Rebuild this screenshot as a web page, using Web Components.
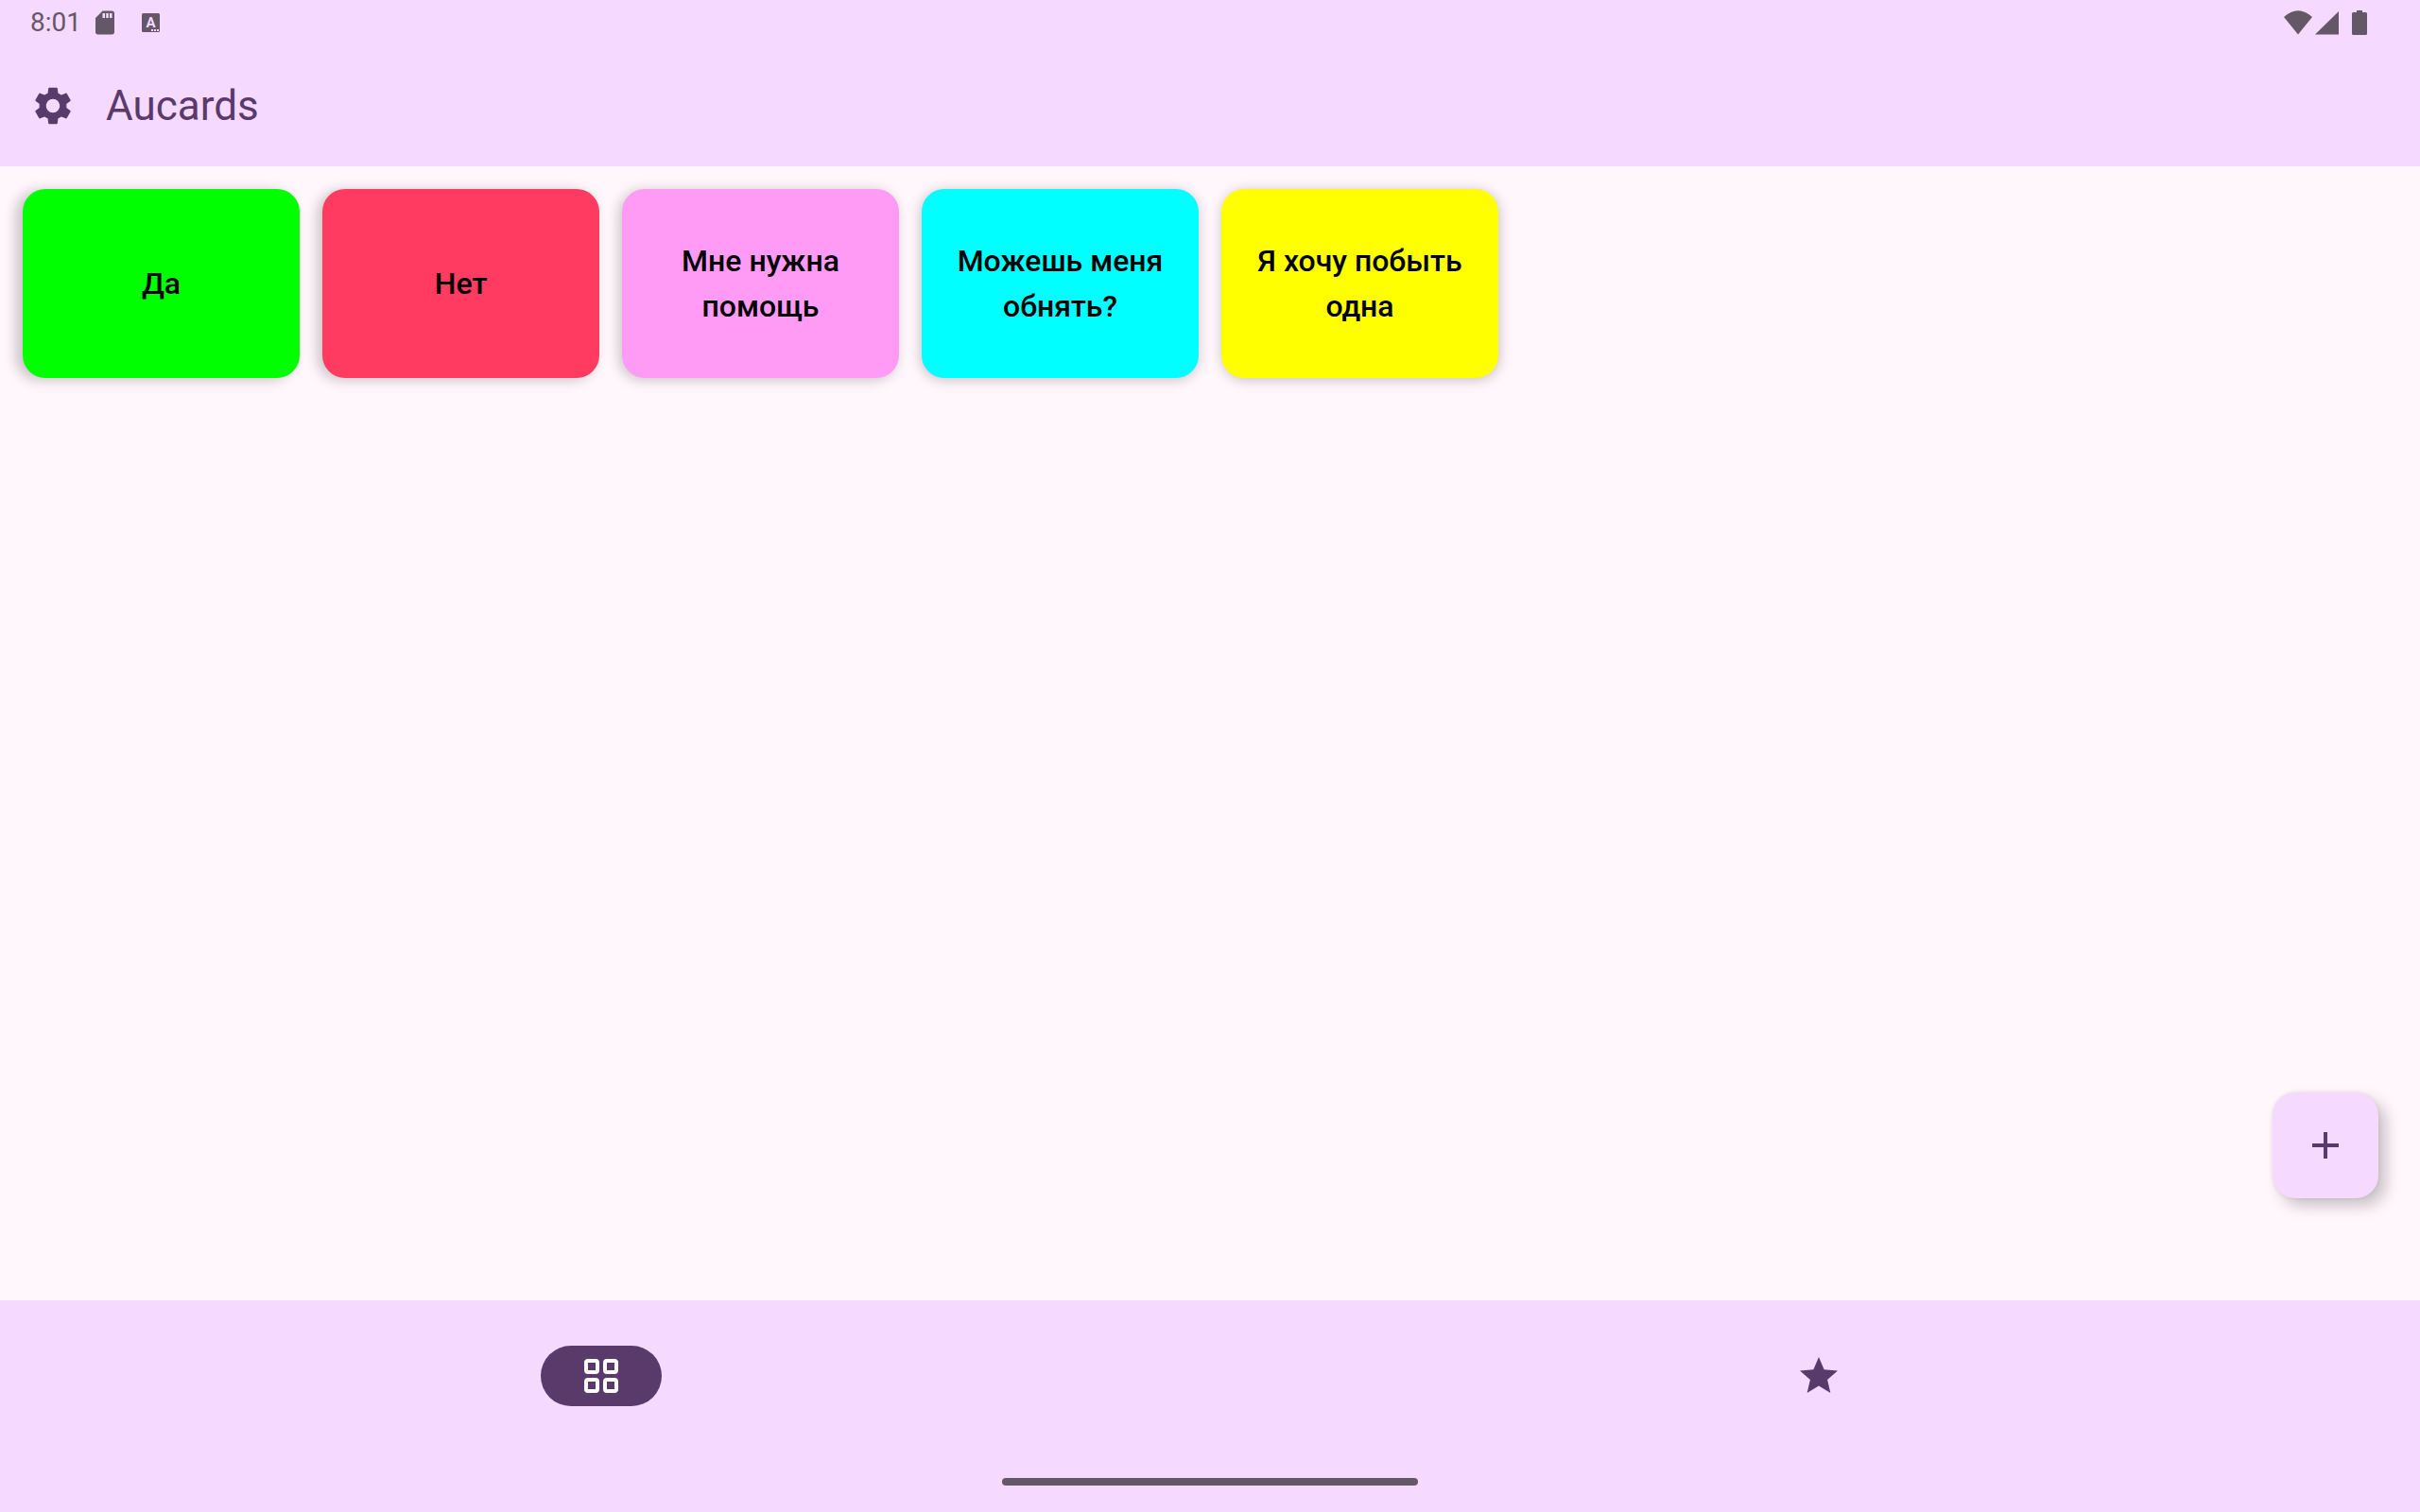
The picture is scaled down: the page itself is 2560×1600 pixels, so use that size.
<!DOCTYPE html>
<html lang="ru">
<head>
<meta charset="UTF-8">
<meta name="viewport" content="width=device-width, initial-scale=1">
<title>Aucards</title>
<style>
    :root {
        --bar-color: #f5d9ff;
        --page-color: #fff7fc;
        --primary: #5a3a6b;
        --system: #645767;
    }
    body {
        margin: 0;
        font-family: Roboto, "Liberation Sans", sans-serif;
        background: var(--page-color);
    }
</style>
</head>
<body>
<aucards-app></aucards-app>

<script>
// --- Status Bar ---
class StatusBar extends HTMLElement {
    constructor() {
        super();
        this.attachShadow({ mode: 'open' });
    }

    connectedCallback() {
        this.shadowRoot.innerHTML = `
            <style>
                :host { display: flex; align-items: center; justify-content: space-between; height: 48px; padding: 0 52px 0 32px; color: var(--system); }
                .group { display: flex; align-items: center; }
                time { font-size: 28px; line-height: 48px; margin-right: 10px; }
                svg { display: block; fill: currentColor; }
                .keyboard { margin-left: 20px; }
                .keyboard text { font: 700 15px Roboto, sans-serif; fill: var(--bar-color); }
                .keyboard path { fill: var(--bar-color); }
            </style>
            <div class="group">
                <time>${this.getAttribute('time')}</time>
                <svg width="30" height="30" viewBox="0 0 24 24"><path d="M18 2h-8L4 8v12c0 1.1.9 2 2 2h12c1.1 0 2-.9 2-2V4c0-1.1-.9-2-2-2zM12 8h-2V4h2v4zm3 0h-2V4h2v4zm3 0h-2V4h2v4z"/></svg>
                <svg class="keyboard" width="28" height="48" viewBox="0 0 28 48">
                    <rect x="4" y="14" width="19" height="20" rx="1.5"/>
                    <text x="13.5" y="29" text-anchor="middle">A</text>
                    <path d="M14 31h2v2h-2zM17 31h2v2h-2zM20 31h2v2h-2z"/>
                </svg>
            </div>
            <svg width="92" height="48" viewBox="0 0 92 48">
                <path d="M0 18Q15 4.500 30 18L15 36.500z"/>
                <path d="M58 12v24.500H33z"/>
                <path d="M77 13v-2h6v2h3.500q1.500 0 1.500 1.500v21q0 1.500-1.500 1.500h-13q-1.500 0-1.500-1.500v-21q0-1.500 1.500-1.500z"/>
            </svg>
        `;
    }
}
customElements.define('status-bar', StatusBar);

// --- Top App Bar ---
class TopBar extends HTMLElement {
    constructor() {
        super();
        this.attachShadow({ mode: 'open' });
    }

    connectedCallback() {
        this.shadowRoot.innerHTML = `
            <style>
                :host { display: flex; align-items: center; gap: 16px; height: 128px; padding: 0 16px; color: var(--primary); }
                button { display: grid; place-items: center; width: 80px; height: 80px; padding: 0; border: 0; border-radius: 50%; background: none; color: inherit; }
                svg { fill: currentColor; }
                h1 { margin: 0; font-size: 44px; line-height: 56px; font-weight: 400; }
            </style>
            <button type="button" aria-label="Настройки">
                <svg width="48" height="48" viewBox="0 0 24 24"><path d="M19.14 12.94c.04-.3.06-.61.06-.94 0-.32-.02-.64-.07-.94l2.030-1.580c.18-.14.23-.41.12-.61l-1.920-3.320c-.12-.22-.37-.29-.59-.22l-2.390.96c-.5-.38-1.030-.7-1.620-.94l-.36-2.540c-.04-.24-.24-.41-.48-.41h-3.840c-.24 0-.43.17-.47.41l-.36 2.540c-.59.24-1.130.57-1.620.94l-2.390-.96c-.22-.08-.47 0-.59.22L2.740 8.870c-.12.21-.08.47.12.61l2.030 1.580c-.05.3-.09.63-.09.94s.02.64.07.94l-2.030 1.580c-.18.14-.23.41-.12.61l1.920 3.320c.12.22.37.29.59.22l2.390-.96c.5.38 1.030.7 1.620.94l.36 2.540c.05.24.24.41.48.41h3.840c.24 0 .44-.17.47-.41l.36-2.540c.59-.24 1.130-.56 1.620-.94l2.390.96c.22.08.47 0 .59-.22l1.920-3.320c.12-.22.07-.47-.12-.61l-2.010-1.580zM12 15.600c-1.980 0-3.600-1.620-3.600-3.600s1.620-3.600 3.600-3.600 3.600 1.620 3.600 3.600-1.620 3.600-3.600 3.600z"/></svg>
            </button>
            <h1><slot></slot></h1>
        `;
    }
}
customElements.define('top-bar', TopBar);

// --- Card ---
class TalkCard extends HTMLElement {
    constructor() {
        super();
        this.attachShadow({ mode: 'open' });
    }

    connectedCallback() {
        const color = this.getAttribute('color');
        const shade = this.getAttribute('shade');

        this.shadowRoot.innerHTML = `
            <style>
                :host { display: block; }
                button {
                    display: block; width: 100%; min-height: 200px; padding: 24px; border: 0; border-radius: 24px;
                    background: ${color}; color: #000; box-shadow: ${shade}px 2px 14px rgba(0, 0, 0, 0.22);
                    font: 500 32px/48px Roboto, "Liberation Sans", sans-serif; text-align: center;
                }
            </style>
            <button type="button"><slot></slot></button>
        `;
    }
}
customElements.define('talk-card', TalkCard);

// --- Floating Add Button ---
class AddButton extends HTMLElement {
    constructor() {
        super();
        this.attachShadow({ mode: 'open' });
    }

    connectedCallback() {
        this.shadowRoot.innerHTML = `
            <style>
                :host { display: block; }
                button { display: grid; place-items: center; width: 112px; height: 112px; padding: 0; border: 0; border-radius: 24px; background: var(--bar-color); color: var(--primary); box-shadow: 8px 8px 16px rgba(0, 0, 0, 0.22), 0 0 4px rgba(0, 0, 0, 0.08); }
            </style>
            <button type="button" aria-label="Добавить">
                <svg width="48" height="48" viewBox="0 0 24 24" fill="currentColor"><path d="M19 13h-6v6h-2v-6H5v-2h6V5h2v6h6z"/></svg>
            </button>
        `;
    }
}
customElements.define('add-button', AddButton);

// --- Bottom Navigation ---
class BottomNav extends HTMLElement {
    constructor() {
        super();
        this.attachShadow({ mode: 'open' });
    }

    connectedCallback() {
        this.shadowRoot.innerHTML = `
            <style>
                :host { display: block; background: var(--bar-color); color: var(--primary); }
                nav { display: grid; grid-template-columns: 1fr 1fr; gap: 16px; }
                button { display: grid; place-items: center; height: 160px; padding: 0; border: 0; background: none; color: inherit; }
                .pill { display: grid; place-items: center; width: 128px; height: 64px; border-radius: 32px; }
                .active { background: var(--primary); color: #fff; }
                .gesture { display: grid; place-items: center; height: 64px; }
                .gesture i { width: 440px; height: 8px; border-radius: 4px; background: var(--system); }
            </style>
            <nav>
                <button type="button" aria-label="Карточки" aria-current="page">
                    <span class="pill active">
                        <svg width="48" height="48" viewBox="0 0 48 48" fill="none" stroke="currentColor" stroke-width="4">
                            <rect x="8" y="8" width="12" height="12" rx="2"/>
                            <rect x="28" y="8" width="12" height="12" rx="2"/>
                            <rect x="8" y="28" width="12" height="12" rx="2"/>
                            <rect x="28" y="28" width="12" height="12" rx="2"/>
                        </svg>
                    </span>
                </button>
                <button type="button" aria-label="Избранное">
                    <span class="pill">
                        <svg width="48" height="48" viewBox="0 0 24 24" fill="currentColor"><path d="M12 17.270L18.180 21l-1.640-7.030L22 9.240l-7.190-.61L12 2 9.190 8.630 2 9.240l5.460 4.730L5.820 21z"/></svg>
                    </span>
                </button>
            </nav>
            <div class="gesture"><i></i></div>
        `;
    }
}
customElements.define('bottom-nav', BottomNav);

// --- App ---
const cards = [
    { text: 'Да', color: '#00ff00', shade: -7 },
    { text: 'Нет', color: '#ff3b61', shade: -5 },
    { text: 'Мне нужна помощь', color: '#ff9bf5', shade: -3 },
    { text: 'Можешь меня обнять?', color: '#00ffff', shade: -1 },
    { text: 'Я хочу побыть одна', color: '#ffff00', shade: 1 }
];

class AucardsApp extends HTMLElement {
    constructor() {
        super();
        this.attachShadow({ mode: 'open' });
    }

    connectedCallback() {
        this.shadowRoot.innerHTML = `
            <style>
                :host { display: flex; flex-direction: column; min-height: 100vh; }
                header { background: var(--bar-color); }
                main { position: relative; flex: 1; padding: 24px; }
                .cards { display: grid; grid-template-columns: repeat(auto-fill, minmax(280px, 1fr)); gap: 24px; }
                add-button { position: absolute; right: 44px; bottom: 108px; }
            </style>
            <header>
                <status-bar time="8:01"></status-bar>
                <top-bar>Aucards</top-bar>
            </header>
            <main>
                <div class="cards">
                    ${cards.map(card => `<talk-card color="${card.color}" shade="${card.shade}">${card.text}</talk-card>`).join('')}
                </div>
                <add-button></add-button>
            </main>
            <bottom-nav></bottom-nav>
        `;
    }
}
customElements.define('aucards-app', AucardsApp);
</script>
</body>
</html>
